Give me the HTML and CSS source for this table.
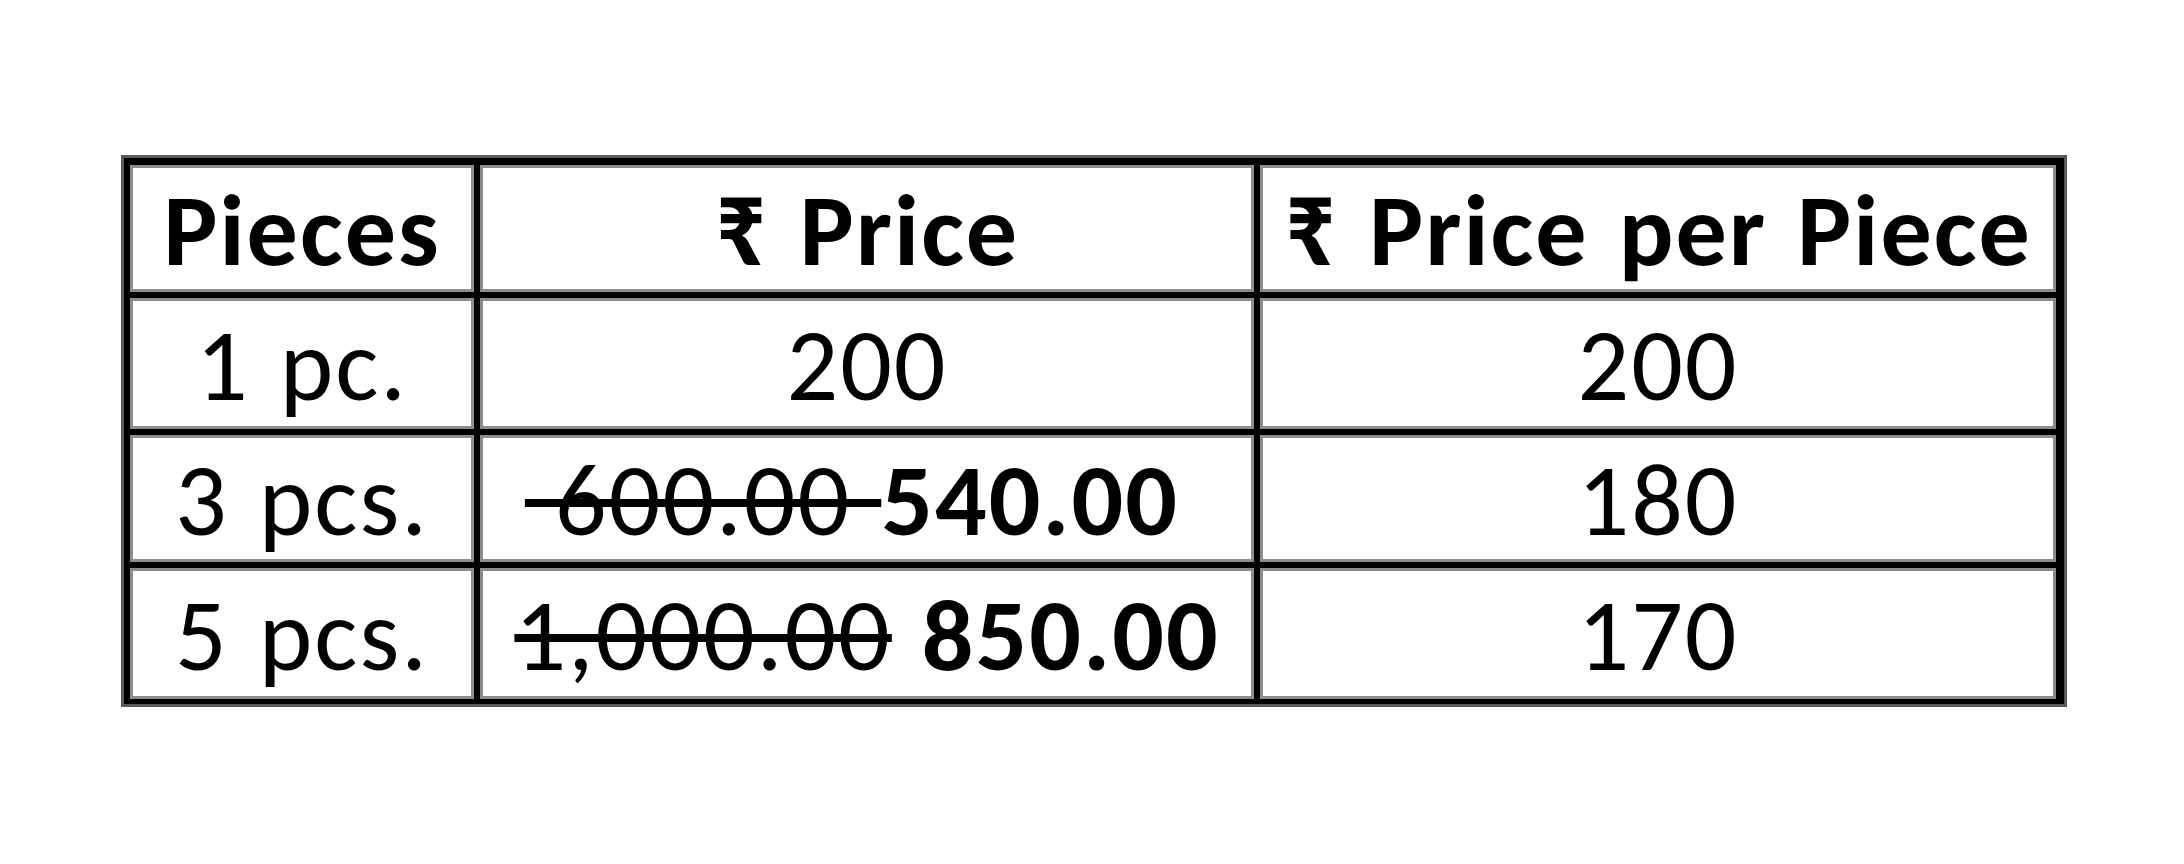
FILE: index.html
```html
<!DOCTYPE html>
<html lang="en">
<head>
<meta charset="utf-8">
<title>Price table</title>
<link rel="stylesheet" href="styles.css">
</head>
<body>
<div class="price-table">
  <div class="cell head">Pieces</div>
  <div class="cell head"><span class="rupee">₹</span>&nbsp;Price</div>
  <div class="cell head"><span class="rupee">₹</span>&nbsp;Price per Piece</div>

  <div class="cell">1 pc.</div>
  <div class="cell">200</div>
  <div class="cell">200</div>

  <div class="cell">3 pcs.</div>
  <div class="cell"><s class="old">&nbsp;600.00&nbsp;</s><b class="new">540.00</b>&nbsp;</div>
  <div class="cell">180</div>

  <div class="cell">5 pcs.</div>
  <div class="cell"><s class="old">1,000.00</s>&nbsp;<b class="new">850.00</b></div>
  <div class="cell">170</div>
</div>
</body>
</html>
```
FILE: styles.css
```css
html, body {
  margin: 0;
  background: #fff;
}

body {
  padding: 155px 0 0 121px;
}

.price-table {
  display: grid;
  width: max-content;
  grid-template-columns: 338px 768px 790px;
  grid-template-rows: 121px 125px 121px 125px;
  gap: 12px;
  padding: 13px 14px 11px 12px;
  background: #000;
  box-shadow: inset 0 0 0 3px #5a5a5a;
}

.cell {
  background: #fff;
  box-shadow: 0 0 0 3px #8c8c8c;
  display: flex;
  align-items: center;
  justify-content: center;
  padding-top: 3px;
  font-family: Carlito, Lato, "DejaVu Sans", sans-serif;
  font-size: 102px;
  font-weight: 400;
  line-height: 1;
  letter-spacing: 2px;
  word-spacing: 5px;
  color: #000;
  white-space: nowrap;
}

.head {
  font-weight: 700;
}

.rupee {
  font-family: Carlito, "Noto Sans", "DejaVu Sans", sans-serif;
  font-weight: 700;
  font-size: 104px;
}

.old {
  text-decoration: line-through;
  text-decoration-thickness: 8px;
}

.new {
  font-weight: 700;
}
```
